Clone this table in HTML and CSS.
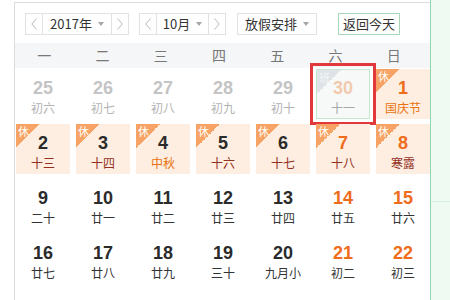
FILE: index.html
```html
<!DOCTYPE html>
<html lang="zh">
<head>
<meta charset="utf-8">
<link rel="stylesheet" href="styles.css">
</head>
<body>
<div class="page">
  <div class="cal">
    <div class="toolbar">
      <div class="sel">
        <span class="arr"><svg width="6" height="12" viewBox="0 0 6 12"><polyline points="5.5,0.5 0.8,6 5.5,11.5" fill="none" stroke="#b9b9b9" stroke-width="1"/></svg></span>
        <span class="val yval">2017年<i class="caret"></i></span>
        <span class="arr"><svg width="6" height="12" viewBox="0 0 6 12"><polyline points="0.5,0.5 5.2,6 0.5,11.5" fill="none" stroke="#b9b9b9" stroke-width="1"/></svg></span>
      </div>
      <div class="sel">
        <span class="arr"><svg width="6" height="12" viewBox="0 0 6 12"><polyline points="5.5,0.5 0.8,6 5.5,11.5" fill="none" stroke="#b9b9b9" stroke-width="1"/></svg></span>
        <span class="val mval">10月<i class="caret"></i></span>
        <span class="arr"><svg width="6" height="12" viewBox="0 0 6 12"><polyline points="0.5,0.5 5.2,6 0.5,11.5" fill="none" stroke="#b9b9b9" stroke-width="1"/></svg></span>
      </div>
      <div class="sel hol"><span class="val">放假安排<i class="caret"></i></span></div>
      <div class="today">返回今天</div>
    </div>
    <div class="week">
      <div class="week-in"><span>一</span><span>二</span><span>三</span><span>四</span><span>五</span><span>六</span><span>日</span></div>
    </div>
    <div class="grid">
      <div class="cell prev"><b>25</b><span>初六</span></div>
      <div class="cell prev"><b>26</b><span>初七</span></div>
      <div class="cell prev"><b>27</b><span>初八</span></div>
      <div class="cell prev"><b>28</b><span>初九</span></div>
      <div class="cell prev"><b>29</b><span>初十</span></div>
      <div class="cell prev sel30"><i class="tag ban">班</i><b>30</b><span>十一</span></div>
      <div class="cell rest we"><i class="tag">休</i><b>1</b><span class="fest">国庆节</span></div>

      <div class="cell rest"><i class="tag">休</i><b>2</b><span>十三</span></div>
      <div class="cell rest"><i class="tag">休</i><b>3</b><span>十四</span></div>
      <div class="cell rest"><i class="tag">休</i><b>4</b><span class="fest">中秋</span></div>
      <div class="cell rest"><i class="tag">休</i><b>5</b><span>十六</span></div>
      <div class="cell rest"><i class="tag">休</i><b>6</b><span>十七</span></div>
      <div class="cell rest we"><i class="tag">休</i><b>7</b><span>十八</span></div>
      <div class="cell rest we"><i class="tag">休</i><b>8</b><span>寒露</span></div>

      <div class="cell"><b>9</b><span>二十</span></div>
      <div class="cell"><b>10</b><span>廿一</span></div>
      <div class="cell"><b>11</b><span>廿二</span></div>
      <div class="cell"><b>12</b><span>廿三</span></div>
      <div class="cell"><b>13</b><span>廿四</span></div>
      <div class="cell we"><b>14</b><span>廿五</span></div>
      <div class="cell we"><b>15</b><span>廿六</span></div>

      <div class="cell"><b>16</b><span>廿七</span></div>
      <div class="cell"><b>17</b><span>廿八</span></div>
      <div class="cell"><b>18</b><span>廿九</span></div>
      <div class="cell"><b>19</b><span>三十</span></div>
      <div class="cell"><b>20</b><span>九月小</span></div>
      <div class="cell we"><b>21</b><span>初二</span></div>
      <div class="cell we"><b>22</b><span>初三</span></div>
    </div>
  </div>
  <div class="side"><div class="side-line"></div></div>
</div>
</body>
</html>
```

FILE: styles.css
```css
html, body {
  margin: 0;
  padding: 0;
  background: #fff;
}
body {
  font-family: "Noto Sans CJK SC", "Liberation Sans", sans-serif;
  color: #333;
  overflow: hidden;
}
.page {
  display: flex;
  width: 450px;
  height: 300px;
}
.cal {
  margin-left: 14px;
  margin-top: 2px;
  width: 415px;
  border-top: 1px solid #dcdcdc;
  border-left: 1px solid #dcdcdc;
  flex: none;
}
.toolbar {
  display: flex;
  align-items: center;
  padding: 10px 0 0 10px;
  height: 22px;
}
.sel {
  display: flex;
  height: 20px;
  border: 1px solid #e2e2e2;
  margin-right: 10px;
  font-size: 13px;
  color: #333;
}
.arr {
  width: 16px;
  display: flex;
  align-items: center;
  justify-content: center;
}
.val {
  display: flex;
  align-items: center;
  justify-content: center;
  border-left: 1px solid #e2e2e2;
  border-right: 1px solid #e2e2e2;
  line-height: 20px;
}
.yval { width: 68px; }
.mval { width: 51px; }
.hol {
  margin-left: 1px;
  margin-right: 21px;
}
.hol .val {
  border: none;
  width: 78px;
}
.caret {
  display: inline-block;
  width: 0;
  height: 0;
  margin-left: 6px;
  border-left: 3.5px solid transparent;
  border-right: 3.5px solid transparent;
  border-top: 4px solid #a6a6a6;
}
.today {
  height: 20px;
  width: 60px;
  border: 1px solid #a5d8b7;
  font-size: 13px;
  line-height: 20px;
  text-align: center;
  color: #333;
}
.week {
  margin-top: 8px;
  height: 25px;
  background: #f4f6f7;
}
.week-in {
  width: 408px;
  display: grid;
  grid-template-columns: repeat(7, 1fr);
  font-size: 14px;
  line-height: 25px;
  color: #777;
  text-align: center;
}
.grid {
  margin-top: 1px;
  padding-left: 1px;
  display: grid;
  grid-template-columns: repeat(7, 54px);
  grid-auto-rows: 50px;
  column-gap: 6px;
  row-gap: 5px;
}
.cell {
  position: relative;
  display: flex;
  flex-direction: column;
  align-items: center;
  padding-top: 9px;
  box-sizing: border-box;
}
.cell b {
  font-family: "Liberation Sans", Arial, sans-serif;
  font-weight: bold;
  font-size: 18px;
  line-height: 20px;
  color: #2b2b2b;
}
.cell span {
  font-size: 12px;
  line-height: 20px;
  color: #333;
}
.cell.we b { color: #ef6c1a; }
.cell.prev b { color: #c4c4c4; }
.cell.prev span { color: #b3b3b3; }
.cell.rest { background: #fdeee1; }
.cell.rest span { color: #93301f; }
.cell.rest span.fest { color: #e9720f; }
.tag {
  position: absolute;
  left: 0;
  top: 0;
  width: 24px;
  height: 24px;
  background: linear-gradient(135deg, #f7a365 50%, transparent 50%);
  font-style: normal;
  font-size: 11px;
  line-height: 14px;
  color: #fff;
  text-indent: 2px;
}
.tag.ban {
  background: linear-gradient(135deg, #dde3e6 50%, transparent 50%);
  color: #f4f6f7;
}
.cell.sel30 {
  background: #f7f9f9;
  border: 1px solid #c2e8d2;
  padding-top: 8px;
  outline: 3px solid #e2383c;
  outline-offset: 3px;
}
.cell.sel30 b { color: #f3c9ae; }
.cell.sel30 span { color: #a9a9a9; }
.side {
  flex: 1;
  background: #effaf3;
  border-left: 1px solid #93d6ad;
}
.side-line {
  margin-top: 201px;
  height: 1px;
  background: #dbefe2;
}
```
